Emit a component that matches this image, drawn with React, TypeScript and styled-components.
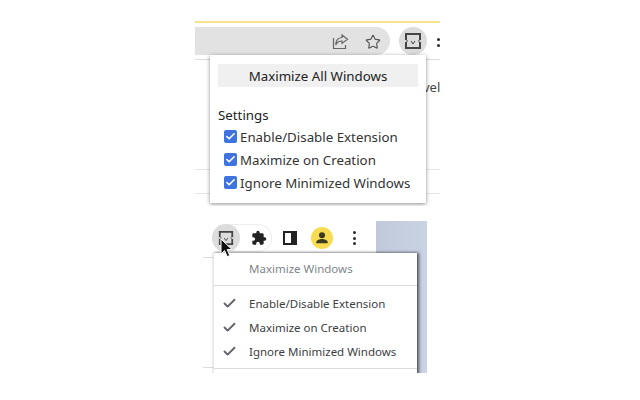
import { Check, Star } from 'lucide-react';
import styled, { createGlobalStyle } from 'styled-components';

const GlobalStyle = createGlobalStyle`
  html, body {
    margin: 0;
    background: #fff;
  }
  body {
    font-family: 'Noto Sans', 'Open Sans', 'Liberation Sans', sans-serif;
    color: #2b2b2b;
  }
`;

const Page = styled.div`
  width: 640px;
  height: 400px;
  overflow: hidden;
  display: flex;
  flex-direction: column;
  padding: 21px 0 0 195px;
  box-sizing: border-box;
`;

/* top crop: the chrome toolbar with the extension's popup */
const TopShot = styled.section`
  position: relative;
  width: 245px;
  height: 185px;
  overflow: hidden;
`;

const YellowLine = styled.div`
  height: 2px;
  background: #f5e38a;
`;

const TopBar = styled.div`
  height: 32px;
  margin-top: 4px;
  display: flex;
  align-items: flex-start;
  border-bottom: 1px solid #dcdcdc;
`;

const Omnibox = styled.div`
  width: 195px;
  height: 28px;
  background: #e2e2e2;
  border-radius: 0 14px 14px 0;
  display: flex;
  align-items: center;
  justify-content: flex-end;
  gap: 16px;
  padding: 1px 9px 0 0;
  box-sizing: border-box;
`;

const ExtButton = styled.div`
  width: 28px;
  height: 28px;
  border-radius: 50%;
  background: #dcdcdc;
  display: flex;
  align-items: center;
  justify-content: center;
  flex: none;
`;

const TopExtButton = styled(ExtButton)`
  margin-left: 9px;
`;

const ToolbarDots = styled.div`
  margin: 11px 0 0 10px;
  display: flex;
  flex-direction: column;
  gap: 3px;
`;

const Dot = styled.span`
  width: 3px;
  height: 3px;
  border-radius: 50%;
  background: #2a2a2a;
`;

const PageRule = styled.div<{ $gap: number }>`
  height: 1px;
  margin-top: ${(p) => p.$gap}px;
  background: #e6e6e6;
`;

const CutWord = styled.span`
  position: absolute;
  left: 228px;
  top: 57px;
  font-size: 13px;
  line-height: 18px;
  color: #444;
`;

const Popup = styled.div`
  position: absolute;
  left: 15px;
  top: 34px;
  width: 216px;
  height: 148px;
  box-sizing: border-box;
  padding: 9px 8px 0;
  background: #fff;
  box-shadow: 0 1px 4px rgba(0, 0, 0, 0.45);
`;

const MaximizeButton = styled.div`
  height: 23px;
  background: #f0f0f0;
  display: flex;
  align-items: center;
  justify-content: center;
  font-size: 13.3px;
  color: #222;
`;

const SettingsLabel = styled.div`
  margin-top: 19px;
  font-size: 13.3px;
  line-height: 19px;
  color: #222;
`;

const OptionRow = styled.label`
  display: flex;
  align-items: center;
  gap: 3px;
  height: 23px;
  margin-left: 6px;
  font-size: 13.3px;
  white-space: nowrap;
  color: #333;
`;

const Box = styled.span`
  width: 13px;
  height: 13px;
  border-radius: 2px;
  background: #3f74e0;
  display: flex;
  align-items: center;
  justify-content: center;
  flex: none;
`;

/* bottom crop: the extension's context menu */
const BottomShot = styled.section`
  position: relative;
  width: 232px;
  height: 152px;
  margin-top: 15px;
  display: flex;
  overflow: hidden;
`;

const BottomBar = styled.div`
  width: 181px;
  height: 34px;
  display: flex;
  align-items: center;
  padding-left: 17px;
  box-sizing: border-box;
`;

const Pill = styled.div`
  display: flex;
  align-items: center;
  width: 60px;
  height: 28px;
  border-radius: 14px;
  box-shadow: inset 0 0 0 1px #eee;
  flex: none;
`;

const PuzzleSlot = styled.div`
  margin-left: 11px;
  display: flex;
`;

const SideSlot = styled.div`
  margin-left: 11px;
  display: flex;
`;

const Avatar = styled.div`
  width: 22px;
  height: 22px;
  margin-left: 14px;
  border-radius: 50%;
  background: #f7dc52;
  display: flex;
  align-items: center;
  justify-content: center;
  flex: none;
`;

const MoreDots = styled.div`
  margin-left: 19.5px;
  display: flex;
  flex-direction: column;
  gap: 2.5px;
`;

const BluePanel = styled.div`
  width: 51px;
  height: 152px;
  background: linear-gradient(90deg, #c0c9da, #c9d3e4);
`;

const GhostRule = styled.div<{ $top: number }>`
  position: absolute;
  left: 8px;
  top: ${(p) => p.$top}px;
  width: 10px;
  height: 1px;
  background: #dcdcdc;
`;

const Cursor = styled.svg`
  position: absolute;
  left: 24px;
  top: 17px;
`;

const Menu = styled.div`
  position: absolute;
  left: 18px;
  top: 32px;
  width: 204px;
  height: 130px;
  background: #fff;
  box-shadow: 2px 0 3px rgba(0, 0, 0, 0.6), 0 -1px 2px rgba(0, 0, 0, 0.12);
  border-left: 1px solid #e8e8e8;
  box-sizing: border-box;
`;

const MenuTitle = styled.div`
  height: 32px;
  padding: 0 0 2px 35px;
  box-sizing: border-box;
  display: flex;
  align-items: center;
  font-size: 11.5px;
  color: #80868b;
`;

const MenuDivider = styled.div`
  height: 1px;
  background: #dadce0;
`;

const MenuList = styled.div`
  padding-top: 5px;
  margin-bottom: 5px;
`;

const MenuItem = styled.div`
  height: 24px;
  display: flex;
  align-items: center;
  font-size: 11.5px;
  color: #3c4043;
`;

const CheckSlot = styled.span`
  width: 35px;
  padding-left: 8px;
  box-sizing: border-box;
  display: flex;
  color: #5f6368;
`;

const MaximizeIcon = ({ size }: { size: number }) => (
  <svg width={size} height={size} viewBox="0 0 18 18" fill="none">
    <path d="M2 2h14v14H2z" stroke="#444" strokeWidth="2" />
    <path d="M1 9h3M14 9h3" stroke="#dcdcdc" strokeWidth="2" />
    <path d="M2 9h2M14 9h2" stroke="#444" strokeWidth="1" />
    <path d="M7 9l2 3 2-3" stroke="#444" strokeWidth="1" />
  </svg>
);

const ShareIcon = () => (
  <svg width="17" height="17" viewBox="0 0 17 17" fill="none" stroke="#666" strokeWidth="1.2">
    <path d="M1.5 5v10.5h12V12" />
    <path d="M10 2l5.5 4.2L10 10.4V8C7 8 5 9 3.8 12c0-4 2-7.2 6.2-7.5z" />
  </svg>
);

const PuzzleIcon = () => (
  <svg width="16" height="16" viewBox="0 0 24 24" fill="#222">
    <path d="M20.5 11H19V7c0-1.1-.9-2-2-2h-4V3.5a2.5 2.5 0 0 0-5 0V5H4c-1.1 0-2 .9-2 2v3.8h1.5a2.7 2.7 0 0 1 0 5.4H2V20c0 1.1.9 2 2 2h3.8v-1.5a2.7 2.7 0 0 1 5.4 0V22H17c1.1 0 2-.9 2-2v-4h1.5a2.5 2.5 0 0 0 0-5z" />
  </svg>
);

const SidePanelIcon = () => (
  <svg width="14" height="14" viewBox="0 0 14 14">
    <path d="M0 0h14v14H0z" fill="#222" />
    <path d="M2 2h6v10H2z" fill="#fff" />
  </svg>
);

const PersonIcon = () => (
  <svg width="16" height="16" viewBox="0 0 24 24" fill="#3a3a20">
    <circle cx="12" cy="8" r="4.5" />
    <path d="M3.5 20v-2c0-3 5.5-4.5 8.5-4.5s8.5 1.5 8.5 4.5v2z" />
  </svg>
);

const options = ['Enable/Disable Extension', 'Maximize on Creation', 'Ignore Minimized Windows'];

const App = () => (
  <>
    <GlobalStyle />
    <Page>
      <TopShot>
        <YellowLine />
        <TopBar>
          <Omnibox>
            <ShareIcon />
            <Star size={16} color="#555" strokeWidth={1.7} />
          </Omnibox>
          <TopExtButton>
            <MaximizeIcon size={18} />
          </TopExtButton>
          <ToolbarDots>
            <Dot />
            <Dot />
          </ToolbarDots>
        </TopBar>
        <PageRule $gap={109} />
        <PageRule $gap={23} />
        <CutWord>vel</CutWord>
        <Popup>
          <MaximizeButton>Maximize All Windows</MaximizeButton>
          <SettingsLabel>Settings</SettingsLabel>
          {options.map((label) => (
            <OptionRow key={label}>
              <Box>
                <Check size={11} color="#fff" strokeWidth={3.5} />
              </Box>
              {label}
            </OptionRow>
          ))}
        </Popup>
      </TopShot>
      <BottomShot>
        <BottomBar>
          <Pill>
            <ExtButton>
              <MaximizeIcon size={16} />
            </ExtButton>
            <PuzzleSlot>
              <PuzzleIcon />
            </PuzzleSlot>
          </Pill>
          <SideSlot>
            <SidePanelIcon />
          </SideSlot>
          <Avatar>
            <PersonIcon />
          </Avatar>
          <MoreDots>
            <Dot />
            <Dot />
            <Dot />
          </MoreDots>
        </BottomBar>
        <BluePanel />
        <GhostRule $top={36} />
        <GhostRule $top={146} />
        <Menu>
          <MenuTitle>Maximize Windows</MenuTitle>
          <MenuDivider />
          <MenuList>
            {options.map((label) => (
              <MenuItem key={label}>
                <CheckSlot>
                  <Check size={15} strokeWidth={3} />
                </CheckSlot>
                {label}
              </MenuItem>
            ))}
          </MenuList>
          <MenuDivider />
        </Menu>
        <Cursor width="16" height="20" viewBox="0 0 14 20">
          <path d="M1 1v15l3.6-3.4 2.6 6 2.6-1.1-2.6-5.9H12z" fill="#111" stroke="#fff" strokeWidth="1" />
        </Cursor>
      </BottomShot>
    </Page>
  </>
);

export default App;
